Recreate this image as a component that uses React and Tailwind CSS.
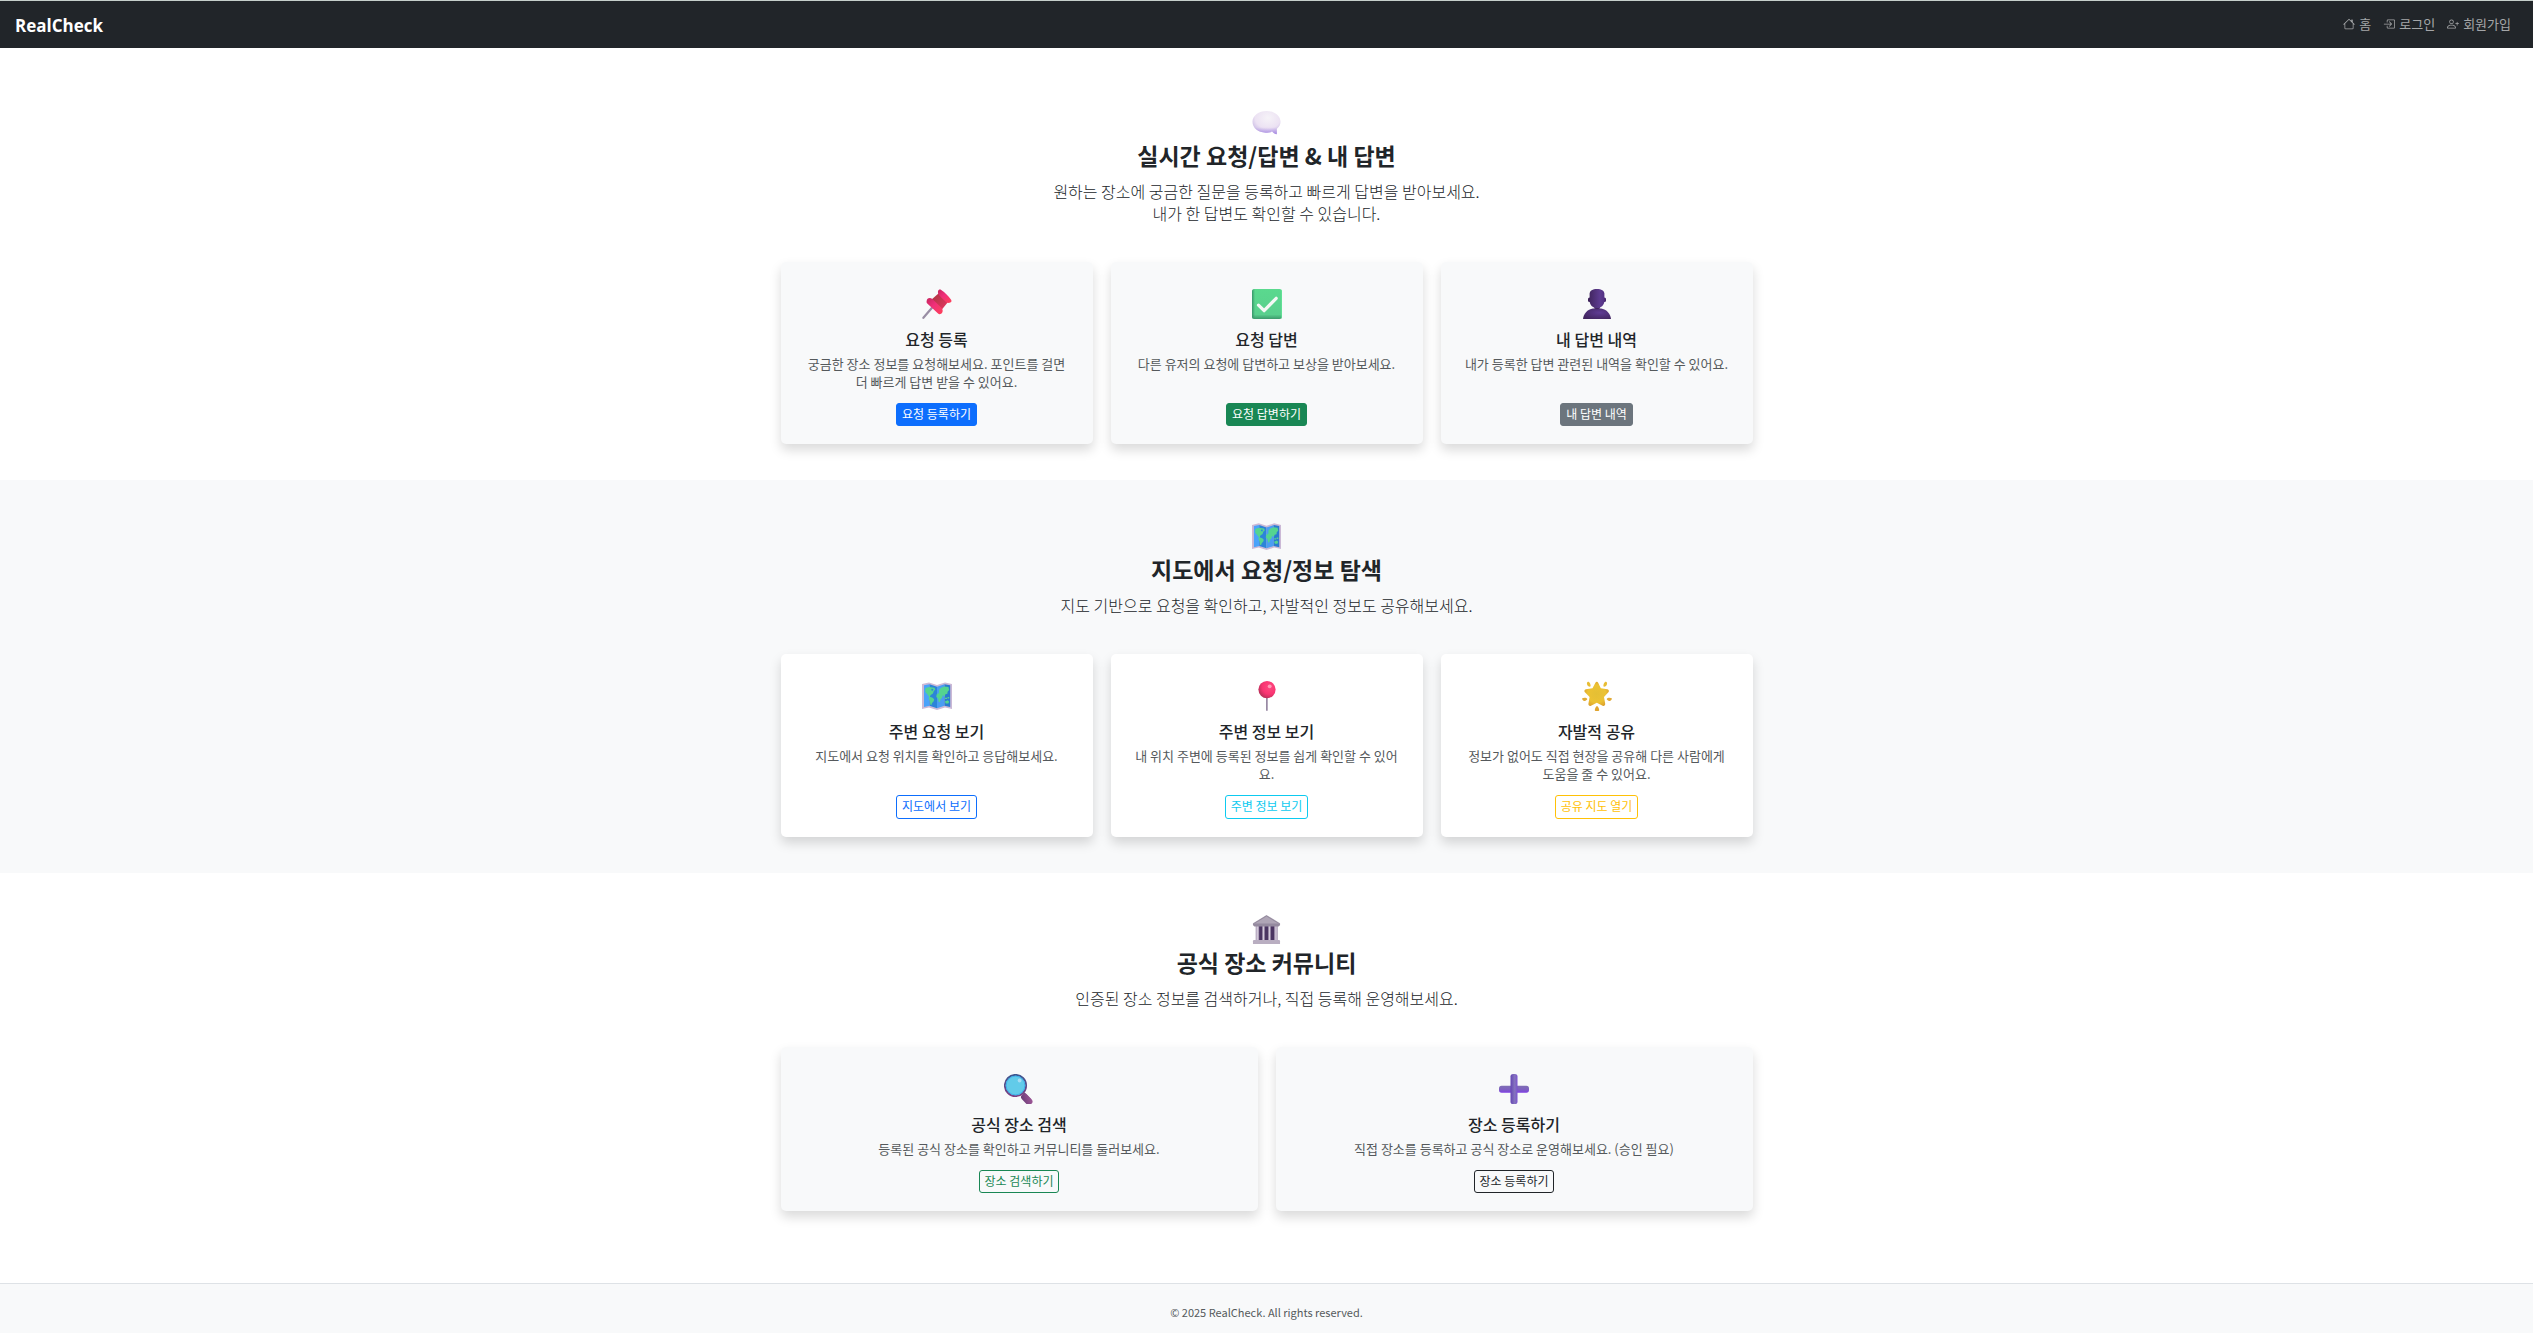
import { BsHouse, BsBoxArrowInRight, BsPersonPlus } from "react-icons/bs";

function SpeechBubble({ className }) {
  return (
    <svg viewBox="1 1 30 30" className={className} aria-hidden="true">
      <defs>
        <radialGradient id="bubble" cx="0.55" cy="0.3" r="0.75">
          <stop offset="0" stopColor="#f6f3f8" />
          <stop offset="0.6" stopColor="#ece2f3" />
          <stop offset="1" stopColor="#bfaee0" />
        </radialGradient>
        <linearGradient id="bubbleTail" x1="0" y1="0" x2="0" y2="1">
          <stop offset="0.7" stopColor="#b9a2e6" stopOpacity="0" />
          <stop offset="1" stopColor="#a98be6" />
        </linearGradient>
      </defs>
      <path d="M16 4C8.200 4 1.500 8.700 1.500 15.300c0 6.500 6 11.200 13.500 11.200 2.600 0 4.900-.3 6.900-1.100 1.200 1.600 2.500 2.500 4.100 2.700.5 0 .7-.3.700-.8v-4.800c2.400-1.800 3.800-4.200 3.800-7.200C30.500 8.700 23.800 4 16 4Z" fill="url(#bubble)" />
      <path d="M16 4C8.200 4 1.500 8.700 1.500 15.300c0 6.500 6 11.200 13.500 11.200 2.600 0 4.900-.3 6.900-1.100 1.200 1.600 2.500 2.500 4.100 2.700.5 0 .7-.3.700-.8v-4.800c2.400-1.800 3.800-4.200 3.800-7.200C30.500 8.700 23.800 4 16 4Z" fill="url(#bubbleTail)" />
    </svg>
  );
}

function Pushpin({ className }) {
  return (
    <svg viewBox="1 1 30 30" className={className} aria-hidden="true">
      <defs>
        <linearGradient id="pinRim" x1="0" y1="0" x2="1" y2="1">
          <stop offset="0" stopColor="#c8265e" />
          <stop offset="0.45" stopColor="#f0307a" />
          <stop offset="1" stopColor="#ff4257" />
        </linearGradient>
        <linearGradient id="pinNeck" x1="0" y1="0" x2="1" y2="1">
          <stop offset="0" stopColor="#a8353f" />
          <stop offset="1" stopColor="#e83765" />
        </linearGradient>
      </defs>
      <path d="M12.500 18 2.400 29.800" stroke="#998ea4" strokeWidth="2.200" strokeLinecap="round" />
      <path d="m18 5 9 9-6.500 8L10 12Z" fill="url(#pinNeck)" />
      <path d="M17 3.200c.4-1.700 1.900-2.200 3.200-1.300 3.800 2.500 7.300 6 9.900 9.900.9 1.400.2 2.700-1.400 3-1.700.3-3.300-.2-4.600-1.500l-5.500-5.500C17.300 6.500 16.700 5 17 3.200Z" fill="url(#pinRim)" />
      <path d="M5.600 13.200c.3-3 3.200-4.200 6-1.900l8.600 8.100c2.300 2.500 1.900 5.500-.9 6.700-.7.300-1.400.2-2-.3L6 15.200c-.5-.6-.6-1.200-.4-2Z" fill="url(#pinRim)" />
    </svg>
  );
}

function CheckMark({ className }) {
  return (
    <svg viewBox="1 1 30 30" className={className} aria-hidden="true">
      <defs>
        <linearGradient id="checkBox" x1="0" y1="0" x2="0" y2="1">
          <stop offset="0" stopColor="#5ad98e" />
          <stop offset="0.85" stopColor="#59cf8d" />
          <stop offset="1" stopColor="#3c9a6c" />
        </linearGradient>
        <linearGradient id="checkEdge" x1="0" y1="0" x2="1" y2="0">
          <stop offset="0" stopColor="#37966a" />
          <stop offset="0.1" stopColor="#37966a" stopOpacity="0" />
          <stop offset="0.95" stopColor="#6dea9f" stopOpacity="0" />
          <stop offset="1" stopColor="#62e596" />
        </linearGradient>
      </defs>
      <rect x="1" y="1" width="30" height="30" rx="2.500" fill="url(#checkBox)" />
      <rect x="1" y="1" width="30" height="30" rx="2.500" fill="url(#checkEdge)" />
      <path d="m7.500 17.200 5.600 5.500L25.200 10.300" fill="none" stroke="#f4f8f5" strokeWidth="3.200" strokeLinecap="round" strokeLinejoin="round" />
    </svg>
  );
}

function Bust({ className }) {
  return (
    <svg viewBox="1 1 30 30" className={className} aria-hidden="true">
      <defs>
        <linearGradient id="bustHead" x1="0" y1="0" x2="1" y2="0">
          <stop offset="0" stopColor="#432762" />
          <stop offset="0.7" stopColor="#5d3b90" />
          <stop offset="1" stopColor="#533183" />
        </linearGradient>
        <radialGradient id="bustBody" cx="0.6" cy="0.4" r="0.7">
          <stop offset="0" stopColor="#5f3c94" />
          <stop offset="1" stopColor="#41255f" />
        </radialGradient>
      </defs>
      <path d="M2 31c.3-5 4.400-10 10-10.600h8C25.600 21 29.700 26 30 31Z" fill="url(#bustBody)" />
      <path d="M13.300 17h5.600v3.600c-1.800 1-3.800 1-5.600 0Z" fill="#41255f" />
      <rect x="7" y="9.500" width="3" height="4.500" rx="1.500" fill="#3c2159" />
      <rect x="22" y="9.500" width="3" height="4.500" rx="1.500" fill="#47286e" />
      <path d="M8.600 5.500C9 2.500 11.500 1 16 1s7 1.500 7.400 4.500v7.200c0 4-3 7.400-7.400 7.400s-7.400-3.400-7.400-7.400Z" fill="url(#bustHead)" />
    </svg>
  );
}

function WorldMap({ className }) {
  return (
    <svg viewBox="1 1 30 30" className={className} aria-hidden="true">
      <path d="m1 4 7-1.600L16 5l8-2.600L31 4v25l-7-1.500-8 2.500-8-2.500L1 29Z" fill="#cbb9d6" />
      <path d="m3 5.200 5.500-1v21.600L3 27Z" fill="#4aa3fa" />
      <path d="M8.500 4.200 16 6.800v21.400l-7.500-2.400Z" fill="#2c84d8" />
      <path d="m16 6.800 7.500-2.600v21.600L16 28.200Z" fill="#4a9df2" />
      <path d="m23.500 4.200 5.700 1V27l-5.700-1.200Z" fill="#2a7bd0" />
      <path d="M4.300 8.200 8 7l5.500.8.8 1.800-1.600 1.600-.7 2.200-2.300 1.500-.9 1.800 2.800 1 1.600 1.600-.5 2-1.600 1.600-.7 2-1-.2-.5-3.500-1.300-2.600.6-1.600-1.700-2.400L4.300 12Z" fill="#54d490" />
      <path d="m10.500 8.700 1.900.3-.8 1.900-1.300-.6Z" fill="#2c84d8" />
      <path d="m18 9.800 2-2 3.500-1.400 4 .6.600 3-1.500 1.700-.2 2-2 .6-.9 2.600-1.600-1.800-.7 2.600-1.600 1.600-.6 2.600-1.200.2-.9-3.800-1.600-1.300.3-2.500 2.300-1.600Z" fill="#54d490" />
      <path d="M24 17.800h2v1.300h-2ZM26.500 17h1.700v1.500h-1.700ZM23.800 21.500l3-1.300 1.400 1.500-.9 1.700h-2.500Z" fill="#54d490" />
    </svg>
  );
}

function RoundPin({ className }) {
  return (
    <svg viewBox="1 1 30 30" className={className} aria-hidden="true">
      <defs>
        <radialGradient id="roundPin" cx="0.65" cy="0.35" r="0.7">
          <stop offset="0" stopColor="#ff4a80" />
          <stop offset="0.6" stopColor="#f93572" />
          <stop offset="1" stopColor="#b82f58" />
        </radialGradient>
        <linearGradient id="needle" x1="0" y1="0" x2="1" y2="0">
          <stop offset="0" stopColor="#8a7b97" />
          <stop offset="1" stopColor="#c3b8ca" />
        </linearGradient>
      </defs>
      <rect x="15" y="15" width="2" height="16" rx="1" fill="url(#needle)" />
      <circle cx="16" cy="9.600" r="8.600" fill="url(#roundPin)" />
      <circle cx="18.700" cy="6.300" r="1.900" fill="#ff9cb8" />
    </svg>
  );
}

function GlowingStar({ className }) {
  return (
    <svg viewBox="1 1 30 30" className={className} aria-hidden="true">
      <defs>
        <radialGradient id="star" cx="0.5" cy="0.5" r="0.6">
          <stop offset="0" stopColor="#e4bf35" />
          <stop offset="0.6" stopColor="#ecc233" />
          <stop offset="1" stopColor="#d99a2c" />
        </radialGradient>
      </defs>
      <path d="M14.300 2.900c.7-1.400 2.300-1.400 3 0l2.500 5.300 6.600 1c1.500.3 2 2 1 3.100L23 16.900l1.200 6.900c.2 1.600-1.200 2.600-2.600 1.900l-5.800-2.900-5.800 2.900c-1.400.7-2.800-.3-2.600-1.900l1.200-6.900-4.700-4.600c-1-1.100-.5-2.800 1-3.100l6.600-1Z" fill="url(#star)" />
      <path d="M6 2.700c.3-.9 1.300-1.200 2-.6.9.8 1.500 2.300 1.600 3.600 0 .9-.8 1.300-1.600.9C6.500 5.900 5.600 4 6 2.700ZM26 2.700c-.3-.9-1.300-1.200-2-.6-.9.8-1.500 2.300-1.600 3.600 0 .9.8 1.300 1.600.9 1.500-.7 2.400-2.600 2-3.900Z" fill="#e8bd34" />
      <path d="M1.300 18.300c-.5.800.2 1.600 1.300 2.500.8.600 2 .2 3.300-1 .7-.8.300-1.700-.7-1.900-1.500-.3-3.200-.2-3.900.4ZM30.700 18.300c.5.800-.2 1.600-1.300 2.500-.8.600-2 .2-3.300-1-.7-.8-.3-1.700.7-1.900 1.500-.3 3.200-.2 3.900.4Z" fill="#e1aa35" />
      <path d="M16 26c.9 0 2.100 2.600 2.200 3.900 0 .7-.5 1.100-1.200 1.100h-2c-.7 0-1.200-.4-1.200-1.100.1-1.300 1.300-3.900 2.200-3.900Z" fill="#e0a52f" />
    </svg>
  );
}

function ClassicalBuilding({ className }) {
  return (
    <svg viewBox="1 1 30 30" className={className} aria-hidden="true">
      <defs>
        <linearGradient id="column" x1="0" y1="0" x2="1" y2="0">
          <stop offset="0" stopColor="#a596b0" />
          <stop offset="0.5" stopColor="#d5cbdc" />
          <stop offset="1" stopColor="#9c8ca8" />
        </linearGradient>
      </defs>
      <rect x="6" y="12" width="20" height="15" fill="#4b3562" />
      <rect x="4.800" y="12" width="3.600" height="15" fill="url(#column)" />
      <rect x="11.600" y="12" width="2.600" height="15" fill="url(#column)" />
      <rect x="17.800" y="12" width="2.600" height="15" fill="url(#column)" />
      <rect x="24" y="12" width="3.600" height="15" fill="url(#column)" />
      <path d="M2 9.500 14.800 1.700c.8-.5 1.600-.5 2.400 0L30 9.500v2H2Z" fill="#afa5b6" />
      <path d="M2 9.800h28v1.500L28.500 13h-25L2 11.300Z" fill="#958a9f" />
      <path d="M2 28.200c0-.8.500-1.300 1.300-1.300h25.400c.8 0 1.300.5 1.300 1.300V31H2Z" fill="#b9aec1" />
      <path d="M16 2 3.500 9.600" stroke="#8d8397" strokeWidth="0.800" />
      <path d="m16 2 12.500 7.600" stroke="#8d8397" strokeWidth="0.800" />
    </svg>
  );
}

function Magnifier({ className }) {
  return (
    <svg viewBox="1 1 30 30" className={className} aria-hidden="true">
      <defs>
        <linearGradient id="lensRing" x1="0" y1="0" x2="0" y2="1">
          <stop offset="0" stopColor="#3c568f" />
          <stop offset="1" stopColor="#7c3f83" />
        </linearGradient>
        <linearGradient id="handle" x1="0" y1="1" x2="1" y2="0">
          <stop offset="0" stopColor="#663a75" />
          <stop offset="1" stopColor="#a35a9a" />
        </linearGradient>
      </defs>
      <path d="m20.500 20.500 6.500 6.800" stroke="#6f3f7c" strokeWidth="3" />
      <rect x="19.500" y="19.500" width="13" height="7" rx="3.200" transform="rotate(46 21 22)" fill="url(#handle)" />
      <circle cx="12.500" cy="12.500" r="10.700" fill="#62cbe9" stroke="url(#lensRing)" strokeWidth="1.700" />
      <circle cx="12.500" cy="12.500" r="9.400" fill="none" stroke="#3fb0ea" strokeWidth="1" />
      <circle cx="16.600" cy="7.500" r="1.900" fill="#a6dcf4" />
    </svg>
  );
}

function PlusSign({ className }) {
  return (
    <svg viewBox="1 1 30 30" className={className} aria-hidden="true">
      <defs>
        <linearGradient id="plusBar" x1="0" y1="0" x2="0" y2="1">
          <stop offset="0" stopColor="#7f6fb4" />
          <stop offset="0.5" stopColor="#7e62bf" />
          <stop offset="1" stopColor="#7f3fe4" />
        </linearGradient>
        <linearGradient id="plusStem" x1="0" y1="0" x2="1" y2="0">
          <stop offset="0" stopColor="#6344b4" />
          <stop offset="0.6" stopColor="#8574bd" />
          <stop offset="1" stopColor="#7a52cf" />
        </linearGradient>
      </defs>
      <rect x="1" y="12.700" width="30" height="7" rx="2.600" fill="url(#plusBar)" />
      <rect x="12.500" y="1" width="7" height="30" rx="2.600" fill="url(#plusStem)" />
    </svg>
  );
}

const navLinks = [
  { label: "홈", Icon: BsHouse },
  { label: "로그인", Icon: BsBoxArrowInRight },
  { label: "회원가입", Icon: BsPersonPlus },
];

const sections = [
  {
    Icon: SpeechBubble,
    title: "실시간 요청/답변 & 내 답변",
    lead: ["원하는 장소에 궁금한 질문을 등록하고 빠르게 답변을 받아보세요.", "내가 한 답변도 확인할 수 있습니다."],
    className: "bg-white pt-[54px]",
    grid: "grid-cols-3",
    card: "bg-[#f8f9fa]",
    cards: [
      { Icon: Pushpin, title: "요청 등록", text: "궁금한 장소 정보를 요청해보세요. 포인트를 걸면 더 빠르게 답변 받을 수 있어요.", action: "요청 등록하기", button: "h-[23px] border-[#0d6efd] bg-[#0d6efd] text-white" },
      { Icon: CheckMark, title: "요청 답변", text: "다른 유저의 요청에 답변하고 보상을 받아보세요.", action: "요청 답변하기", button: "h-[23px] border-[#198754] bg-[#198754] text-white" },
      { Icon: Bust, title: "내 답변 내역", text: "내가 등록한 답변 관련된 내역을 확인할 수 있어요.", action: "내 답변 내역", button: "h-[23px] border-[#6c757d] bg-[#6c757d] text-white" },
    ],
  },
  {
    Icon: WorldMap,
    title: "지도에서 요청/정보 탐색",
    lead: ["지도 기반으로 요청을 확인하고, 자발적인 정보도 공유해보세요."],
    className: "bg-[#f8f9fa] pt-9",
    grid: "grid-cols-3",
    card: "bg-white",
    cards: [
      { Icon: WorldMap, title: "주변 요청 보기", text: "지도에서 요청 위치를 확인하고 응답해보세요.", action: "지도에서 보기", button: "h-6 border-[#0d6efd] text-[#0d6efd]" },
      { Icon: RoundPin, title: "주변 정보 보기", text: "내 위치 주변에 등록된 정보를 쉽게 확인할 수 있어요.", action: "주변 정보 보기", button: "h-6 border-[#0dcaf0] text-[#0dcaf0]" },
      { Icon: GlowingStar, title: "자발적 공유", text: "정보가 없어도 직접 현장을 공유해 다른 사람에게 도움을 줄 수 있어요.", action: "공유 지도 열기", button: "h-6 border-[#ffc107] text-[#ffc107]" },
    ],
  },
  {
    Icon: ClassicalBuilding,
    title: "공식 장소 커뮤니티",
    lead: ["인증된 장소 정보를 검색하거나, 직접 등록해 운영해보세요."],
    className: "bg-white pt-9",
    grid: "grid-cols-2",
    card: "bg-[#f8f9fa]",
    cards: [
      { Icon: Magnifier, title: "공식 장소 검색", text: "등록된 공식 장소를 확인하고 커뮤니티를 둘러보세요.", action: "장소 검색하기", button: "h-[23px] border-[#198754] text-[#198754]" },
      { Icon: PlusSign, title: "장소 등록하기", text: "직접 장소를 등록하고 공식 장소로 운영해보세요. (승인 필요)", action: "장소 등록하기", button: "h-[23px] border-[#212529] text-[#212529]" },
    ],
  },
];

function Card({ Icon, title, text, action, button, surface }) {
  return (
    <article className={`flex flex-col items-center rounded-[5px] px-[22px] pt-[22px] pb-[18px] text-center shadow-[0_6px_12px_rgba(0,0,0,0.15)] ${surface}`}>
      <div className="flex h-10 items-center">
        <Icon className="size-[30px]" />
      </div>
      <h3 className="mt-1 text-[16px] leading-[22px] font-medium">{title}</h3>
      <p className="mt-[5px] mb-3 text-[13px] leading-[18px] text-[#55595c]">{text}</p>
      <button type="button" className={`mt-auto flex items-center rounded-[3px] border px-[5px] pb-0.5 text-[12px] leading-[18px] ${button}`}>
        {action}
      </button>
    </article>
  );
}

function Section({ Icon, title, lead, className, grid, card, cards }) {
  return (
    <section className={`px-4 pb-9 ${className}`}>
      <div className="mx-auto max-w-[972px]">
        <header className="mb-[38px] text-center">
          <div className="flex h-10 items-center justify-center">
            <Icon className="size-[29px]" />
          </div>
          <h2 className="text-[23px] leading-[26px] font-bold">{title}</h2>
          <p className="mt-3 text-[16px] leading-[22px] font-light">
            {lead.map((line) => (
              <span key={line} className="block">{line}</span>
            ))}
          </p>
        </header>
        <div className={`grid gap-[18px] ${grid}`}>
          {cards.map((item) => (
            <Card key={item.title} surface={card} {...item} />
          ))}
        </div>
      </div>
    </section>
  );
}

export default function App() {
  return (
    <div className="flex min-h-screen flex-col bg-white font-['Noto_Sans_CJK_KR',sans-serif] text-[#212529]">
      <nav className="flex h-12 items-center justify-between border-t border-[#c5cfcb] bg-[#212529] pr-[22px] pl-[15px]">
        <a href="#home" className="pt-0.5 font-['Open_Sans','Noto_Sans_CJK_KR',sans-serif] text-[17px] leading-6 font-bold text-white">RealCheck</a>
        <ul className="flex gap-3 pb-0.5 text-[13px] leading-5 text-white/60">
          {navLinks.map(({ label, Icon }) => (
            <li key={label}>
              <a href={`#${label}`} className="flex items-center gap-1">
                <Icon className="size-3" aria-hidden="true" />
                {label}
              </a>
            </li>
          ))}
        </ul>
      </nav>
      <main className="grow">
        {sections.map((section) => (
          <Section key={section.title} {...section} />
        ))}
      </main>
      <footer className="mt-9 flex h-[50px] items-center justify-center border-t border-[#dee2e6] bg-[#f8f9fa] pt-1.5 text-[11px] leading-4 text-[#55595c]">
        © 2025 RealCheck. All rights reserved.
      </footer>
    </div>
  );
}
